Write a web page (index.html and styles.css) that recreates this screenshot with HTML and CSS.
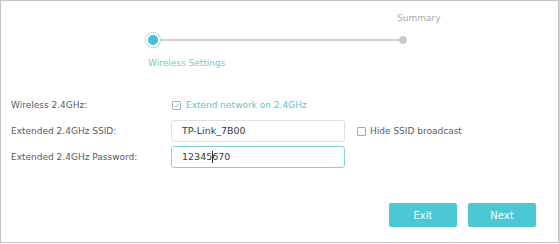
FILE: index.html
```html
<!DOCTYPE html>
<html>
<head>
<meta charset="utf-8">
<link rel="stylesheet" href="styles.css">
</head>
<body>
<div class="frame">
  <div class="stepper">
    <div class="step-top">Summary</div>
    <div class="track">
      <span class="node-active"><span class="node-core"></span></span>
      <span class="line"></span>
      <span class="node-end"></span>
    </div>
    <div class="step-bottom">Wireless Settings</div>
  </div>

  <div class="form">
    <div class="row row-check">
      <div class="label">Wireless 2.4GHz:</div>
      <div class="control">
        <span class="check checked">
          <svg viewBox="0 0 9 9" width="9" height="9"><path d="M2.2 4.6 L3.9 6.3 L6.9 2.7" fill="none" stroke="#45c2cf" stroke-width="1.2"/></svg>
        </span>
        <span class="teal-text">Extend network on 2.4GHz</span>
      </div>
    </div>
    <div class="row">
      <div class="label">Extended 2.4GHz SSID:</div>
      <div class="control">
        <div class="input">TP-Link_7B00</div>
        <span class="check side-check"></span>
        <span class="side-text">Hide SSID broadcast</span>
      </div>
    </div>
    <div class="row">
      <div class="label">Extended 2.4GHz Password:</div>
      <div class="control">
        <div class="input focused">12345<span class="caret"></span>670</div>
      </div>
    </div>
  </div>

  <div class="actions">
    <button class="btn">Exit</button>
    <button class="btn">Next</button>
  </div>
</div>
</body>
</html>
```

FILE: styles.css
```css
html, body {
  margin: 0;
  padding: 0;
  background: #fff;
}

body {
  font-family: "DejaVu Sans", Verdana, sans-serif;
  font-size: 9px;
  color: #5a5a5a;
}

.frame {
  width: 557px;
  height: 241px;
  border: 1px solid #c4c4c4;
  display: flex;
  flex-direction: column;
}

.stepper {
  margin: 10px 0 0 144px;
  width: 262px;
}

.step-top {
  padding-left: 252px;
  height: 14px;
  line-height: 14px;
  color: #aaa;
  white-space: nowrap;
}

.track {
  display: flex;
  align-items: center;
  height: 16px;
  margin-top: 7px;
}

.node-active {
  width: 14px;
  height: 14px;
  border: 1px dotted #45c2cf;
  border-radius: 50%;
  display: flex;
  align-items: center;
  justify-content: center;
  flex: none;
}

.node-core {
  width: 10px;
  height: 10px;
  border-radius: 50%;
  background: #45c2cf;
}

.line {
  flex: 1;
  height: 2px;
  background: #cfcfcf;
}

.node-end {
  width: 8px;
  height: 8px;
  border-radius: 50%;
  background: #cbcbcb;
  flex: none;
}

.step-bottom {
  margin-top: 8px;
  padding-left: 3px;
  line-height: 14px;
  color: #72c8d3;
  white-space: nowrap;
}

.form {
  margin-top: 25px;
  padding-left: 10px;
  display: flex;
  flex-direction: column;
  gap: 4px;
}

.row {
  display: flex;
  align-items: center;
  height: 22px;
}

.row-check {
  height: 20px;
  margin-bottom: 1px;
}

.label {
  width: 160px;
  flex: none;
}

.control {
  display: flex;
  align-items: center;
}

.check {
  width: 7px;
  height: 7px;
  border: 1px solid #a8a8a8;
  border-radius: 1px;
  display: inline-flex;
  align-items: center;
  justify-content: center;
  flex: none;
}

.check.checked {
  margin-left: 1px;
  margin-right: 5px;
  border-color: #9ab8bc;
}

.check svg {
  display: block;
}

.check.side-check {
  margin-left: 12px;
  margin-right: 4px;
}

.teal-text {
  color: #5cc4d0;
}

.input {
  width: 162px;
  height: 20px;
  border: 1px solid #e0e0e0;
  border-radius: 3px;
  padding-left: 10px;
  font-size: 9.5px;
  line-height: 20px;
  color: #3a3a3a;
  display: flex;
  align-items: center;
}

.input.focused {
  border-color: #7fd3dc;
}

.caret {
  width: 1px;
  height: 12px;
  background: #333;
  margin-right: -1px;
}

.side-text {
  color: #5a5a5a;
}

.actions {
  margin-top: 35px;
  margin-right: 22px;
  display: flex;
  justify-content: flex-end;
  gap: 11px;
}

.btn {
  width: 68px;
  height: 24px;
  border: none;
  border-radius: 2px;
  background: #4bc8d4;
  color: #fff;
  font-family: "DejaVu Sans", Verdana, sans-serif;
  font-size: 10px;
  padding: 0;
}
```
